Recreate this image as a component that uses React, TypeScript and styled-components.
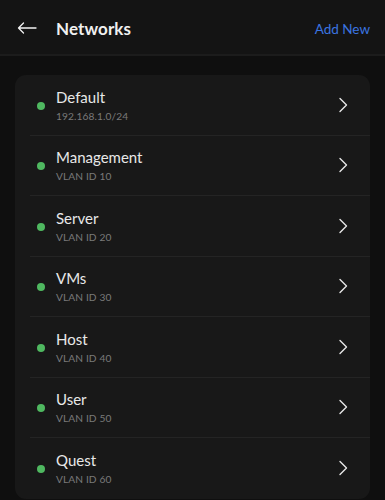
import React from "react";
import styled, { createGlobalStyle } from "styled-components";

const Global = createGlobalStyle`
  html, body { margin: 0; padding: 0; background: #0f0f0f; }
  body { font-family: Lato, "Open Sans", sans-serif; -webkit-font-smoothing: antialiased; }
`;

const Page = styled.div`
  width: 385px;
  height: 500px;
  background: #0f0f0f;
  overflow: hidden;
`;

const Header = styled.header`
  height: 52px;
  background: #141414;
  border-bottom: 2px solid #1c1c1c;
  display: flex;
  align-items: center;
  padding: 2px 15px 0 17px;
  box-sizing: content-box;
`;

const BackButton = styled.button`
  background: none;
  border: none;
  padding: 0;
  width: 20px;
  height: 20px;
  display: flex;
  align-items: center;
  color: #f2f2f2;
  margin-right: 19px;
`;

const Title = styled.h1`
  margin: 0;
  flex: 1;
  font-size: 17px;
  font-weight: 700;
  color: #f0f0f0;
  letter-spacing: 0.1px;
`;

const AddNew = styled.a`
  font-size: 13.5px;
  color: #3b74e0;
  text-decoration: none;
  padding-top: 1px;
`;

const Body = styled.div`
  padding: 19px 15px 0;
`;

const Card = styled.div`
  background: #181818;
  border-radius: 11px;
  overflow: hidden;
`;

const Row = styled.div<{ $last?: boolean }>`
  display: flex;
  align-items: center;
  height: 60.5px;
  margin-left: 15px;
  padding: 0 22px 0 7px;
  box-sizing: border-box;
  border-bottom: ${(p) => (p.$last ? "none" : "1px solid #242424")};
`;

const Dot = styled.span`
  width: 8px;
  height: 8px;
  border-radius: 50%;
  background: #4fb860;
  margin-right: 11px;
  margin-top: 2px;
  flex-shrink: 0;
`;

const Texts = styled.div`
  flex: 1;
  display: flex;
  flex-direction: column;
  gap: 4px;
  padding-top: 1px;
`;

const Name = styled.div`
  font-size: 15px;
  color: #e8e8e8;
  line-height: 18px;
`;

const Sub = styled.div`
  font-size: 10.2px;
  color: #7a7a7a;
  line-height: 13px;
  letter-spacing: 0.1px;
`;

const Chevron = () => (
  <svg width="10" height="16" viewBox="0 0 10 16" fill="none">
    <path d="M2 1.5 L8.5 8 L2 14.5" stroke="#e6e6e6" strokeWidth="1.4" strokeLinecap="round" strokeLinejoin="round" />
  </svg>
);

const networks = [
  { name: "Default", sub: "192.168.1.0/24" },
  { name: "Management", sub: "VLAN ID 10" },
  { name: "Server", sub: "VLAN ID 20" },
  { name: "VMs", sub: "VLAN ID 30" },
  { name: "Host", sub: "VLAN ID 40" },
  { name: "User", sub: "VLAN ID 50" },
  { name: "Quest", sub: "VLAN ID 60" },
];

export default function App() {
  return (
    <Page>
      <Global />
      <Header>
        <BackButton aria-label="Back">
          <svg width="20" height="12" viewBox="0 0 20 12" fill="none">
            <path d="M19 6 H1.5 M6.5 1 L1.5 6 L6.5 11" stroke="#f2f2f2" strokeWidth="1.3" strokeLinecap="round" strokeLinejoin="round" />
          </svg>
        </BackButton>
        <Title>Networks</Title>
        <AddNew>Add New</AddNew>
      </Header>
      <Body>
        <Card>
          {networks.map((n, i) => (
            <Row key={n.name} $last={i === networks.length - 1}>
              <Dot />
              <Texts>
                <Name>{n.name}</Name>
                <Sub>{n.sub}</Sub>
              </Texts>
              <Chevron />
            </Row>
          ))}
        </Card>
      </Body>
    </Page>
  );
}
